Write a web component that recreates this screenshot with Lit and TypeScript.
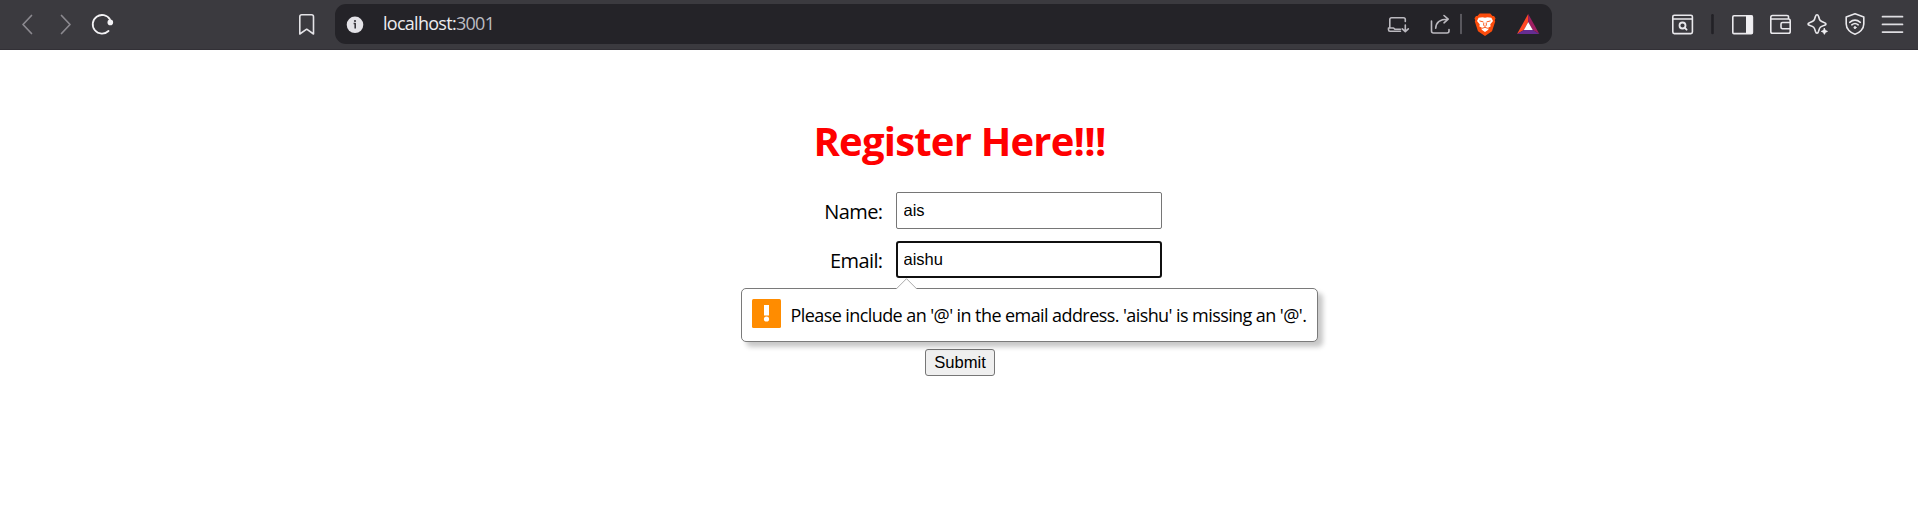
import { LitElement, html, css, svg } from "lit";
import { customElement } from "lit/decorators.js";

const icon = (x: number, w: number, body: unknown) =>
  html`<svg width=${w} height="49" viewBox="${x} 0 ${w} 49" fill="none" stroke-linecap="round" stroke-linejoin="round">${body}</svg>`;

@customElement("browser-toolbar")
class BrowserToolbar extends LitElement {
  static styles = css`
    :host { display: block; }
    .bar { display: flex; height: 49px; background: #3b3a3f; border-bottom: 1px solid #323036; color: #f0eff2; }
    svg { display: block; flex: none; }
    .nav { display: flex; width: 335px; gap: 8px; box-sizing: border-box; padding-left: 12px; }
    .mark { margin-left: 169px; }
    .address { display: flex; align-items: center; box-sizing: border-box; width: 1217px; height: 40px; margin-top: 4px; padding: 0 5px 0 8px; border-radius: 11px; background: #242328; }
    .address svg { align-self: flex-start; margin-top: -4px; height: 49px; }
    .url { margin-left: 18px; flex: 1; font: 18px/24px "Open Sans", sans-serif; letter-spacing: -0.72px; color: #ececef; padding-bottom: 2px; }
    .port { color: #bcbcc2; }
    .tools { display: flex; margin-left: 114px; }
  `;

  render() {
    return html`<div class="bar">
      <div class="nav">
        ${icon(12, 30, svg`<path d="M31.5 15.5L23 24.5L31.5 33.5" stroke="#8b898f" stroke-width="1.7"/>`)}
        ${icon(50, 30, svg`<path d="M61.5 15.5L70 24.5L61.5 33.5" stroke="#8b898f" stroke-width="1.7"/>`)}
        ${icon(88, 28, svg`<path d="M110 19.5A9.3 9.3 0 1 0 108.5 31" stroke="#f3f2f5" stroke-width="1.8"/><circle cx="110.3" cy="22.4" r="2.8" fill="#f3f2f5"/>`)}
        <div class="mark">${icon(293, 28, svg`<path d="M299.8 34V16.8Q299.8 14.8 301.8 14.8H311.5Q313.5 14.8 313.5 16.8V34L306.7 29.2Z" stroke="#e4e3e7" stroke-width="1.6"/>`)}</div>
      </div>
      <div class="address">
        ${icon(343, 22, svg`<circle cx="355" cy="24.8" r="8.3" fill="#e3e2e7"/><path d="M353.6 23.5H355.2V28.4" stroke="#38363c" stroke-width="1.6" stroke-linecap="butt"/><circle cx="355" cy="21" r="1.1" fill="#38363c"/>`)}
        <span class="url">localhost:<span class="port">3001</span></span>
        ${icon(1382, 165, svg`
          <g stroke="#bbb9bf" stroke-width="1.6">
            <path d="M1405.3 21.5V19.6Q1405.3 17.8 1403.5 17.8H1391.6Q1389.8 17.8 1389.8 19.6V28M1400.5 31.2H1390Q1388.5 31.2 1388.5 29.8V28H1393.5L1394.8 29.2H1400.5M1405.3 25V31.5M1402.3 28.8L1405.3 31.7L1408.3 28.8"/>
            <path d="M1431.5 21V31Q1431.5 33 1433.5 33H1447Q1449 33 1449 31V29.5M1435.7 28.3C1436 21.8 1440 19.2 1447.5 19.2M1444 15.5L1448.2 19.2L1444 22.8"/>
            <path d="M1461 14.5V33.5" stroke="#77757b" stroke-width="1.3"/>
          </g>
          <path d="M1479.7 13.5H1490.3L1492.6 16L1494 15.9L1495.5 18.3L1494.8 20.3L1495.2 21.5L1492 31.3L1485 36L1478 31.3L1474.8 21.5L1475.2 20.3L1474.5 18.3L1476 15.9L1477.4 16Z" fill="#fb4c0c"/>
          <path d="M1478.6 17.8L1482.5 17.2L1485 17.8L1487.5 17.2L1491.4 17.8L1493 21L1490.3 24.2L1490.6 26.4L1488.3 27.4L1488.3 29.8L1485 32L1481.7 29.8L1481.7 27.4L1479.4 26.4L1479.7 24.2L1477 21Z" fill="#fff"/>
          <path d="M1479.8 21L1483 21.8M1490.2 21L1487 21.8M1483.8 23L1483.6 25.4L1485 26.4L1486.4 25.4L1486.2 23M1482.4 28.2L1485 27.4L1487.6 28.2" stroke="#fb4c0c" stroke-width=".9"/>
          <path d="M1528.2 14L1517 34L1523.8 30L1528.2 22Z" fill="#ff4724"/><path d="M1528.2 14L1539.4 34L1532.8 30L1528.2 22Z" fill="#9e1f63"/><path d="M1517 34H1539.4L1532.8 30H1523.8Z" fill="#662d91"/><path d="M1528.2 22L1532.8 30H1523.8Z" fill="#fff"/>`)}
      </div>
      <div class="tools">
        ${icon(1666, 32, svg`<g stroke="#e9e8ec" stroke-width="1.6"><rect x="1672.8" y="15.2" width="19.6" height="18.4" rx="1.5"/><path d="M1673 19H1692"/><circle cx="1682.5" cy="25.5" r="3" stroke-width="1.8"/><path d="M1684.8 27.8L1686.6 29.7" stroke-width="1.8"/></g>`)}
        ${icon(1698, 28, svg`<path d="M1712.5 15.3V33" stroke="#222126" stroke-width="2.6"/>`)}
        ${icon(1726, 34, svg`<rect x="1732.8" y="15.8" width="19.6" height="17.8" rx="1.2" stroke="#e9e8ec" stroke-width="1.6"/><path d="M1746 15.5H1752.5V33.8H1746Z" fill="#f0eff2"/>`)}
        ${icon(1760, 40, svg`<g stroke="#e9e8ec" stroke-width="1.6"><path d="M1788.5 19V16.5Q1788.5 15.5 1787 15.5H1772.5Q1770.8 15.5 1770.8 17.2V31.5Q1770.8 33.3 1772.5 33.3H1788.5Q1790.2 33.3 1790.2 31.5V21Q1790.2 19 1788.5 19H1771"/><path d="M1790 22.5H1782.5Q1781 22.5 1781 24V27.2Q1781 28.7 1782.5 28.7H1790"/></g>`)}
        ${icon(1800, 38, svg`<path d="M1817 14.8Q1818 14.8 1818.6 16.5C1819.6 20.6 1820.5 21.5 1824 22.4Q1826 23 1826 24Q1826 25 1824 25.5C1820.5 26.5 1819.6 27.3 1818.6 31.2Q1818 33.2 1817 33.2Q1816 33.2 1815.4 31.2C1814.4 27.3 1813.5 26.5 1810 25.5Q1808 25 1808 24Q1808 23 1810 22.4C1813.5 21.5 1814.4 20.6 1815.4 16.5Q1816 14.8 1817 14.8Z" stroke="#e9e8ec" stroke-width="1.6"/><circle cx="1824.4" cy="31.4" r="4.6" fill="#3b3a3f"/><path d="M1824.4 28.5L1825.3 30.5L1827.4 31.4L1825.3 32.3L1824.4 34.3L1823.5 32.3L1821.4 31.4L1823.5 30.5Z" fill="#f0eff2" stroke="#f0eff2"/>`)}
        ${icon(1838, 34, svg`<g stroke="#e9e8ec" stroke-width="1.6"><path d="M1855 13.8L1863.8 17V24C1863.8 29 1859.5 32.8 1855 34.2C1850.5 32.8 1846.2 29 1846.2 24V17Z"/><path d="M1849.7 22.3Q1855 18 1860.3 22.3M1851.8 24.8Q1855 22.2 1858.2 24.8"/><circle cx="1855" cy="27.6" r="1" fill="#e9e8ec" stroke-width="1"/></g>`)}
        ${icon(1872, 42, svg`<path d="M1882.5 16.7H1902.5M1882.5 24.4H1902.5M1882.5 32.1H1902.5" stroke="#dedde1" stroke-width="1.7"/>`)}
      </div>
    </div>`;
  }
}

@customElement("app-root")
class AppRoot extends LitElement {
  static styles = css`
    :host { display: block; height: 521px; overflow: hidden; background: #fff; color: #000; font-family: "Open Sans", sans-serif; }
    form { display: flex; flex-direction: column; align-items: center; }
    h1 { margin: 64px 0 0 1px; font-size: 40px; line-height: 54px; font-weight: 700; color: #f00; letter-spacing: -0.78px; white-space: nowrap; }
    .fields { display: grid; grid-template-columns: 83px 266px; column-gap: 13px; row-gap: 12px; margin: 24px 0 0 43px; }
    label { text-align: right; font-size: 20px; line-height: 39px; height: 37px; letter-spacing: -0.6px; white-space: nowrap; }
    .field { position: relative; height: 37px; }
    input { box-sizing: border-box; width: 266px; height: 37px; margin: 0; padding: 0 7px 1px; border: 1px solid #767676; border-radius: 2px; outline: none; background: #fff; color: #000; font: 16.5px "Liberation Sans", sans-serif; display: block; }
    .active { border: 2px solid #101010; border-radius: 3px; padding: 0 6px 1px; }
    button { margin: 71px 0 0 2px; box-sizing: border-box; width: 70px; height: 27px; padding: 0; border: 1px solid #767676; border-radius: 3px; background: #efefef; color: #000; font: 16.6px "Liberation Sans", sans-serif; }
    .bubble { position: absolute; left: -155px; top: 47px; box-sizing: border-box; width: 577px; height: 54px; padding-left: 10px; display: flex; align-items: center; border: 1px solid #7a7a7a; border-radius: 5px; background: #fff; box-shadow: 5px 5px 5px rgba(0,0,0,.22); z-index: 1; }
    .tip { position: absolute; left: 154px; top: -11px; }
    .warn { flex: none; margin-top: -4px; }
    .message { margin-left: 10px; font-size: 18px; line-height: 24px; letter-spacing: -0.58px; white-space: nowrap; }
  `;

  render() {
    return html`<browser-toolbar></browser-toolbar>
      <form novalidate>
        <h1>Register Here!!!</h1>
        <div class="fields">
          <label for="name">Name:</label>
          <div class="field"><input id="name" .value=${"ais"}></div>
          <label for="email">Email:</label>
          <div class="field">
            <input id="email" class="active" .value=${"aishu"}>
            <div class="bubble">
              <svg class="tip" width="22" height="12" viewBox="0 0 22 12"><path d="M.5 10.7L10.5 .7L20.5 10.7V12H.5Z" fill="#fff"/><path d="M.5 10.7L10.5 .7L20.5 10.7" fill="none" stroke="#aaa"/></svg>
              <svg class="warn" width="29" height="29" viewBox="0 0 29 29"><rect width="29" height="29" rx="1.5" fill="#ff8c00"/><path d="M12 6H17V16.5H12Z" fill="#fff"/><circle cx="14.5" cy="20" r="2.6" fill="#fff"/></svg>
              <span class="message">Please include an '@' in the email address. 'aishu' is missing an '@'.</span>
            </div>
          </div>
        </div>
        <button type="button">Submit</button>
      </form>`;
  }
}
